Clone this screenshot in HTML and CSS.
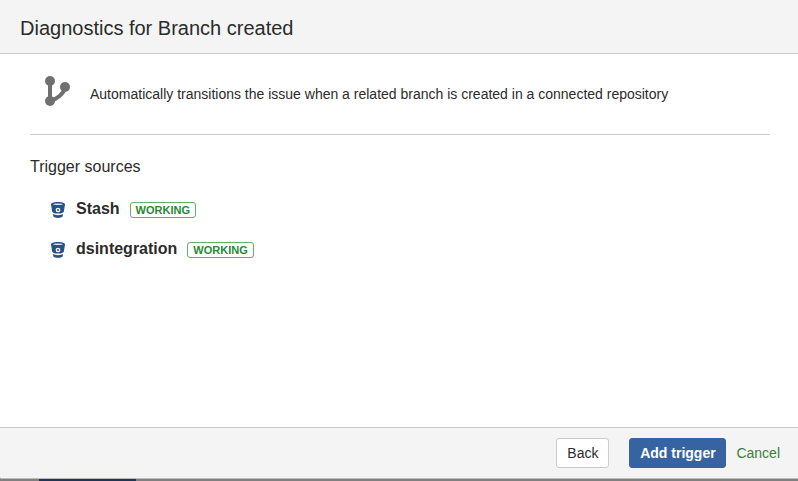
FILE: index.html
```html
<!DOCTYPE html>
<html lang="en">
<head>
<meta charset="utf-8">
<title>Diagnostics for Branch created</title>
<link rel="stylesheet" href="styles.css">
</head>
<body>
<svg class="sprite" aria-hidden="true">
  <symbol id="bucket" viewBox="0 0 14 16">
    <path fill="#2a5088" d="M0 2.400C0 .9 3 0 7 0s7 .9 7 2.400L12.800 9.700C12 11 10 11.500 7 11.500S2 11 1.200 9.700z"/>
    <ellipse cx="7" cy="2.200" rx="4.800" ry=".8" fill="#dfe6f0"/>
    <circle cx="7" cy="8" r="1.700" fill="#2a5088" stroke="#fff" stroke-width="1.300"/>
    <path fill="#2a5088" d="M1.800 12C4.500 13.500 9.500 13.500 12.200 12L11.700 14.300C10.500 16.400 3.500 16.400 2.300 14.300z"/>
  </symbol>
</svg>
<section class="dialog">
  <header class="header"><h1>Diagnostics for Branch created</h1></header>
  <main class="content">
    <div class="summary">
      <svg class="branch" viewBox="0 0 26 30" width="26" height="30" fill="none" stroke="#707070">
        <path stroke-width="4" d="M5 5v20M20 12C18.500 18 12 23 5 25"/>
        <g fill="#707070" stroke="none"><circle cx="5" cy="5" r="5"/><circle cx="20" cy="11" r="5"/><circle cx="5" cy="25" r="5"/></g>
      </svg>
      <p>Automatically transitions the issue when a related branch is created in a connected repository</p>
    </div>
    <h2>Trigger sources</h2>
    <ul class="sources">
      <li><svg class="bucket"><use href="#bucket"/></svg><strong>Stash</strong><span class="lozenge">WORKING</span></li>
      <li><svg class="bucket"><use href="#bucket"/></svg><strong>dsintegration</strong><span class="lozenge">WORKING</span></li>
    </ul>
  </main>
  <footer class="footer">
    <button class="button">Back</button>
    <button class="button primary">Add trigger</button>
    <a class="cancel">Cancel</a>
  </footer>
</section>
<div class="backdrop"><div class="backdrop-accent"></div></div>
</body>
</html>
```

FILE: styles.css
```css
* { box-sizing: border-box; }
body {
  margin: 0;
  height: 481px;
  overflow: hidden;
  display: flex;
  flex-direction: column;
  background: #808080;
  color: #2b2b2b;
  font: 14px/20px "Liberation Sans", Arial, sans-serif;
}
h1, h2, p, ul { margin: 0; padding: 0; font-weight: normal; }
.sprite { display: none; }
.dialog {
  flex: 1;
  display: flex;
  flex-direction: column;
  background: #fff;
  border-radius: 1px 0 0 3px;
  overflow: hidden;
}
.header {
  height: 54px;
  padding: 13px 20px 0;
  background: #f4f4f4;
  border-bottom: 1px solid #ccc;
}
h1 { font-size: 20px; line-height: 30px; }
.content { flex: 1; padding: 0 28px 0 30px; }
.summary {
  display: flex;
  height: 81px;
  padding: 22px 0 0 15px;
  border-bottom: 1px solid #ccc;
}
.branch { flex: none; margin-right: 19px; }
.summary p { padding-top: 8px; white-space: nowrap; }
h2 { margin-top: 22px; font-size: 16px; line-height: 20px; }
.sources { list-style: none; padding: 22px 0 0 21px; }
.sources li { display: flex; height: 40px; }
.bucket { width: 14px; height: 16px; margin: 3px 11px 0 0; }
.sources strong { font-size: 16px; line-height: 20px; }
.lozenge {
  height: 16px;
  margin: 3px 0 0 10px;
  padding: 0 5px;
  border: 1px solid #5fae6b;
  border-radius: 3px;
  color: #2a8735;
  font-size: 11px;
  font-weight: bold;
  line-height: 14px;
}
.footer {
  display: flex;
  height: 52px;
  padding: 10px 18px 0 0;
  justify-content: flex-end;
  background: #f4f4f4;
  border-top: 1px solid #ccc;
  border-bottom: 1px solid #bbb;
}
.button {
  width: 53px;
  height: 30px;
  margin: 0 20px 0 0;
  padding: 0;
  border: 1px solid #ccc;
  border-radius: 3px;
  background: #fff;
  color: #2b2b2b;
  font: 14px/20px "Liberation Sans", Arial, sans-serif;
}
.primary {
  width: 97px;
  margin-right: 10px;
  border-color: #3863a3;
  background: #3863a3;
  color: #fff;
  font-weight: bold;
}
.cancel { color: #3b7f3b; line-height: 30px; }
.backdrop { height: 2px; padding-left: 39px; }
.backdrop-accent { width: 97px; height: 2px; background: #1d3658; }
```
